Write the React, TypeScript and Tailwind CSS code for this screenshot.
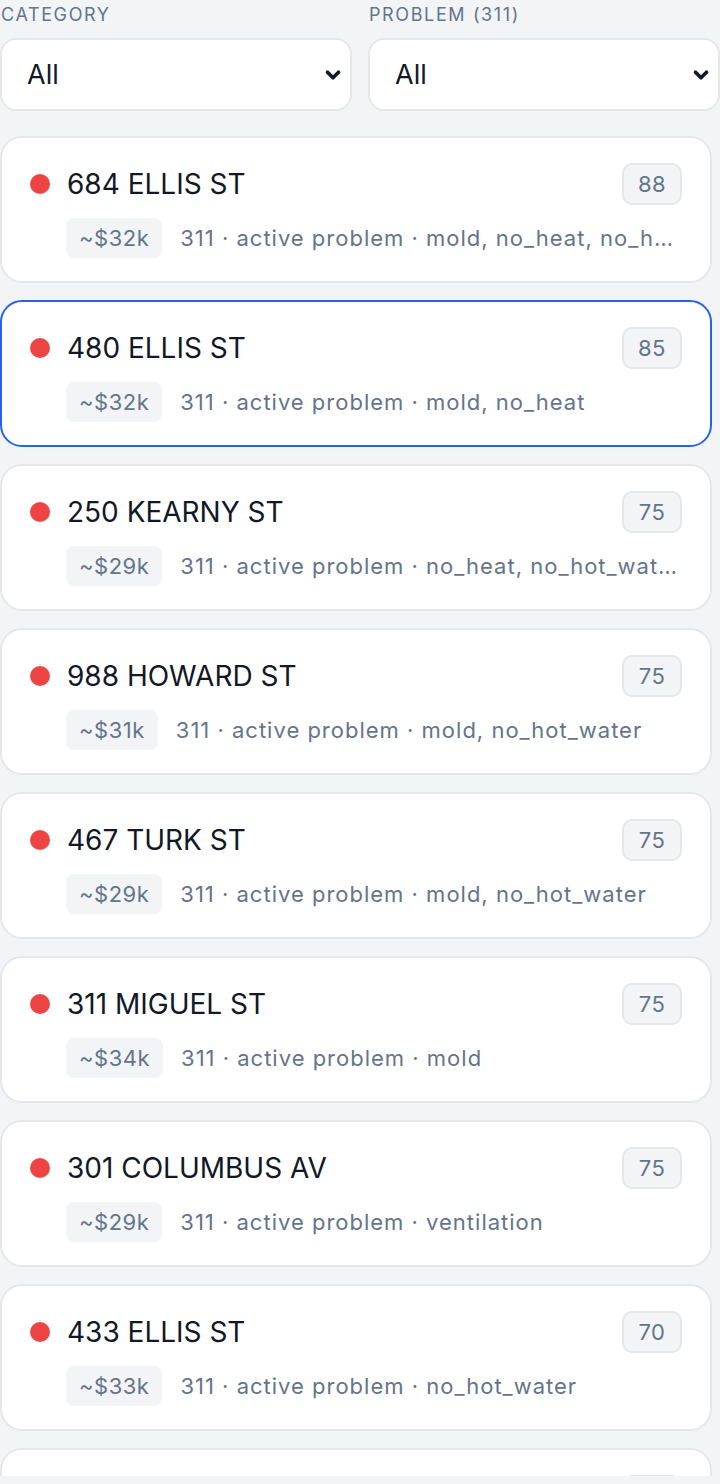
import { ChevronDown } from "lucide-react";

type Item = {
  address: string;
  score: number;
  cost: string;
  tags: string;
  selected?: boolean;
};

const ITEMS: Item[] = [
  { address: "684 ELLIS ST", score: 88, cost: "~$32k", tags: "mold, no_heat, no_hot_water" },
  { address: "480 ELLIS ST", score: 85, cost: "~$32k", tags: "mold, no_heat", selected: true },
  { address: "250 KEARNY ST", score: 75, cost: "~$29k", tags: "no_heat, no_hot_water, mold" },
  { address: "988 HOWARD ST", score: 75, cost: "~$31k", tags: "mold, no_hot_water" },
  { address: "467 TURK ST", score: 75, cost: "~$29k", tags: "mold, no_hot_water" },
  { address: "311 MIGUEL ST", score: 75, cost: "~$34k", tags: "mold" },
  { address: "301 COLUMBUS AV", score: 75, cost: "~$29k", tags: "ventilation" },
  { address: "433 ELLIS ST", score: 70, cost: "~$33k", tags: "no_hot_water" },
  { address: "145 TAYLOR ST", score: 70, cost: "~$30k", tags: "mold" },
];

function Filter({ label }: { label: string }) {
  return (
    <div className="flex flex-1 flex-col">
      <div className="mb-[11px] pl-[1px] text-[18px] leading-[24px] tracking-[0.09em] text-[#64748b]">
        {label}
      </div>
      <div className="flex h-[73px] items-center justify-between rounded-[16px] border-2 border-[#e5e7eb] bg-white pl-[25px] pr-[6px] text-[27px] text-[#111827]">
        <span className="pt-[2px]">All</span>
        <ChevronDown size={22} strokeWidth={4} className="text-[#111827]" />
      </div>
    </div>
  );
}

function Card({ item }: { item: Item }) {
  return (
    <div
      className={`mr-[8px] flex h-[147px] shrink-0 flex-col rounded-[22px] border-2 bg-white pl-[28px] pr-[28px] pt-[25px] ${
        item.selected ? "border-[#2563eb]" : "border-[#e5e7eb]"
      }`}
    >
      <div className="flex h-[42px] items-center justify-between">
        <div className="flex items-center gap-[17px]">
          <span className="h-[20px] w-[20px] rounded-full bg-[#ef4444]" />
          <span className="text-[28px] text-[#111827]">{item.address}</span>
        </div>
        <span className="flex h-[42px] w-[60px] items-center justify-center rounded-[10px] border-2 border-[#e5e7eb] bg-[#f3f4f6] text-[22px] tracking-[0.5px] text-[#64748b]">
          {item.score}
        </span>
      </div>
      <div className="mt-[13px] flex h-[40px] items-center gap-[18px] pl-[36px]">
        <span className="flex h-[40px] shrink-0 items-center rounded-[8px] bg-[#f3f4f6] px-[13px] text-[22px] tracking-[0.5px] text-[#64748b]">
          {item.cost}
        </span>
        <span className="min-w-0 flex-1 truncate text-[22px] tracking-[1px] text-[#64748b]">
          311 · active problem · {item.tags}
        </span>
      </div>
    </div>
  );
}

export default function App() {
  return (
    <div
      className="h-[1484px] overflow-hidden bg-[#f3f4f6]"
      style={{ fontFamily: "Inter, 'Noto Sans', sans-serif" }}
    >
      <div className="flex h-[1476px] flex-col overflow-hidden pt-[3px]">
        <div className="flex gap-[16px]">
          <Filter label="CATEGORY" />
          <Filter label="PROBLEM (311)" />
        </div>
        <div className="mt-[25px] flex flex-col gap-[17px]">
          {ITEMS.map((it) => (
            <Card key={it.address} item={it} />
          ))}
        </div>
      </div>
    </div>
  );
}
